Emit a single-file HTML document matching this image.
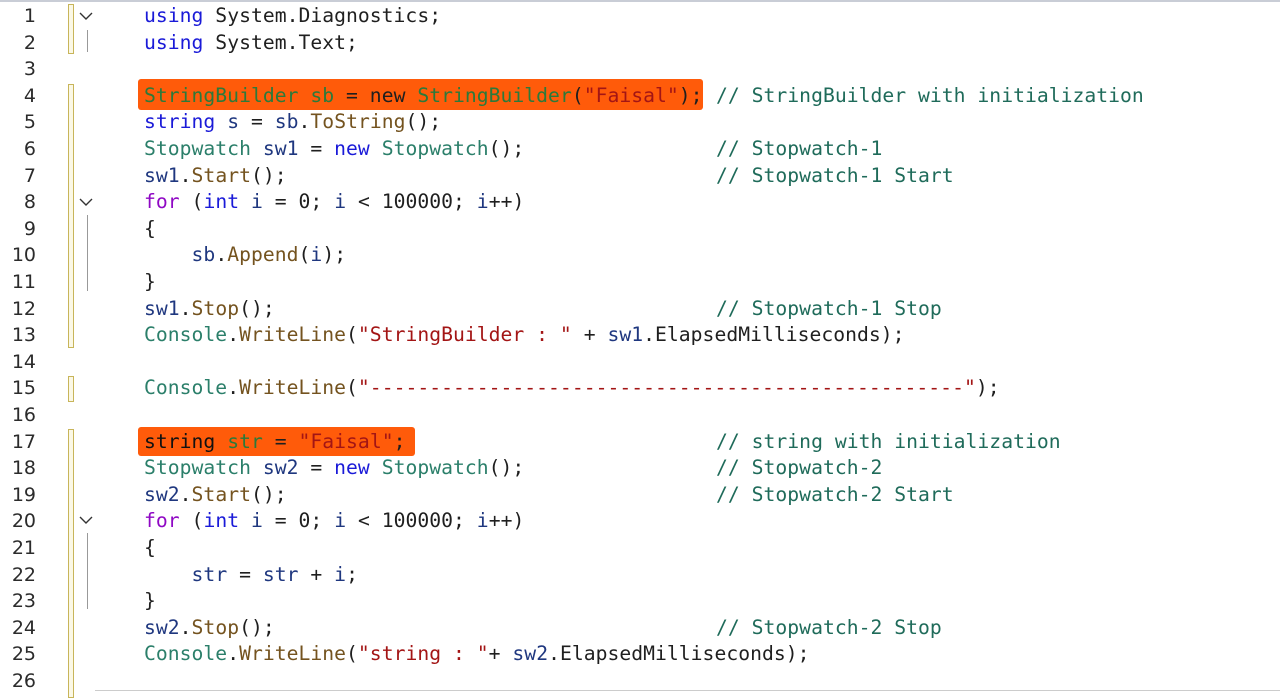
<!DOCTYPE html>
<html><head><meta charset="utf-8"><style>
body{margin:0;width:1280px;height:696px;background:#fff;overflow:hidden;position:relative;font-family:"DejaVu Sans Mono","Liberation Mono",monospace;}
.ln{position:absolute;left:0;width:36px;text-align:right;font-family:"DejaVu Sans","Liberation Sans",sans-serif;font-size:19px;color:#2b2b2b;}
.c{position:absolute;left:144px;font-size:19.7px;white-space:pre;color:#1f1f1f;letter-spacing:0.03px;}
.cm{position:absolute;left:716px;font-size:19.7px;white-space:pre;color:#1f6b5a;letter-spacing:0.03px;}
.k{color:#1a1ad8}.t{color:#2b7f6a}.m{color:#74531f}.s{color:#a31515}.v{color:#1f377f}.p{color:#8f08c4}.g{color:#2b7a3b}
.bar{position:absolute;left:68px;width:4px;border:1px solid #c8b55a;background:#fbf8e6;}
.hl{position:absolute;background:#ff5b0a;border-radius:3px;}
.vl{position:absolute;left:87px;width:1px;background:#999;}
.chev{position:absolute;left:79px;}
</style></head><body>
<div style="position:absolute;left:0;top:0;width:1280px;height:2px;background:#c9cdd6"></div>
<div class="hl" style="left:138px;top:79px;width:565px;height:31px"></div>
<div class="hl" style="left:138px;top:427px;width:277px;height:29px"></div>
<div class="bar" style="top:4px;height:48px"></div>
<div class="bar" style="top:84px;height:262px"></div>
<div class="bar" style="top:376px;height:24px"></div>
<div class="bar" style="top:429px;height:267px"></div>
<svg class="chev" style="top:11px" width="14" height="10"><polyline points="1,2 7,8 13,2" fill="none" stroke="#333" stroke-width="1.4"/></svg>
<div class="vl" style="top:30px;height:22px"></div>
<svg class="chev" style="top:197px" width="14" height="10"><polyline points="1,2 7,8 13,2" fill="none" stroke="#333" stroke-width="1.4"/></svg>
<div class="vl" style="top:215px;height:76px"></div>
<svg class="chev" style="top:515px" width="14" height="10"><polyline points="1,2 7,8 13,2" fill="none" stroke="#333" stroke-width="1.4"/></svg>
<div class="vl" style="top:533px;height:76px"></div>
<div style="position:absolute;left:95px;top:690px;width:1185px;height:1px;background:#ccc"></div>
<div id="x"></div>
<script>
var L=[
['<span class="k">using</span> System.Diagnostics;',''],
['<span class="k">using</span> System.Text;',''],
['',''],
['<span class="g">StringBuilder</span> <span class="g">sb</span> = new <span class="g">StringBuilder</span>(<span class="s">"Faisal"</span>);','// StringBuilder with initialization'],
['<span class="k">string</span> <span class="v">s</span> = <span class="v">sb</span>.<span class="m">ToString</span>();',''],
['<span class="t">Stopwatch</span> <span class="v">sw1</span> = <span class="k">new</span> <span class="t">Stopwatch</span>();','// Stopwatch-1'],
['<span class="v">sw1</span>.<span class="m">Start</span>();','// Stopwatch-1 Start'],
['<span class="p">for</span> (<span class="k">int</span> <span class="v">i</span> = 0; <span class="v">i</span> &lt; 100000; <span class="v">i</span>++)',''],
['{',''],
['    <span class="v">sb</span>.<span class="m">Append</span>(<span class="v">i</span>);',''],
['}',''],
['<span class="v">sw1</span>.<span class="m">Stop</span>();','// Stopwatch-1 Stop'],
['<span class="t">Console</span>.<span class="m">WriteLine</span>(<span class="s">"StringBuilder : "</span> + <span class="v">sw1</span>.ElapsedMilliseconds);',''],
['',''],
['<span class="t">Console</span>.<span class="m">WriteLine</span>(<span class="s">"--------------------------------------------------"</span>);',''],
['',''],
['<span class="k" style="color:#111">string</span> <span class="g">str</span> = <span class="s">"Faisal"</span>;','// string with initialization'],
['<span class="t">Stopwatch</span> <span class="v">sw2</span> = <span class="k">new</span> <span class="t">Stopwatch</span>();','// Stopwatch-2'],
['<span class="v">sw2</span>.<span class="m">Start</span>();','// Stopwatch-2 Start'],
['<span class="p">for</span> (<span class="k">int</span> <span class="v">i</span> = 0; <span class="v">i</span> &lt; 100000; <span class="v">i</span>++)',''],
['{',''],
['    <span class="v">str</span> = <span class="v">str</span> + <span class="v">i</span>;',''],
['}',''],
['<span class="v">sw2</span>.<span class="m">Stop</span>();','// Stopwatch-2 Stop'],
['<span class="t">Console</span>.<span class="m">WriteLine</span>(<span class="s">"string : "</span>+ <span class="v">sw2</span>.ElapsedMilliseconds);',''],
['','']];
var h='';
for(var n=0;n<26;n++){var y=4+n*26.6;
h+='<div class="ln" style="top:'+(y+1)+'px">'+(n+1)+'</div>';
h+='<div class="c" style="top:'+y+'px">'+L[n][0]+'</div>';
if(L[n][1])h+='<div class="cm" style="top:'+y+'px">'+L[n][1]+'</div>';}
document.getElementById('x').innerHTML=h;
</script>
</body></html>
